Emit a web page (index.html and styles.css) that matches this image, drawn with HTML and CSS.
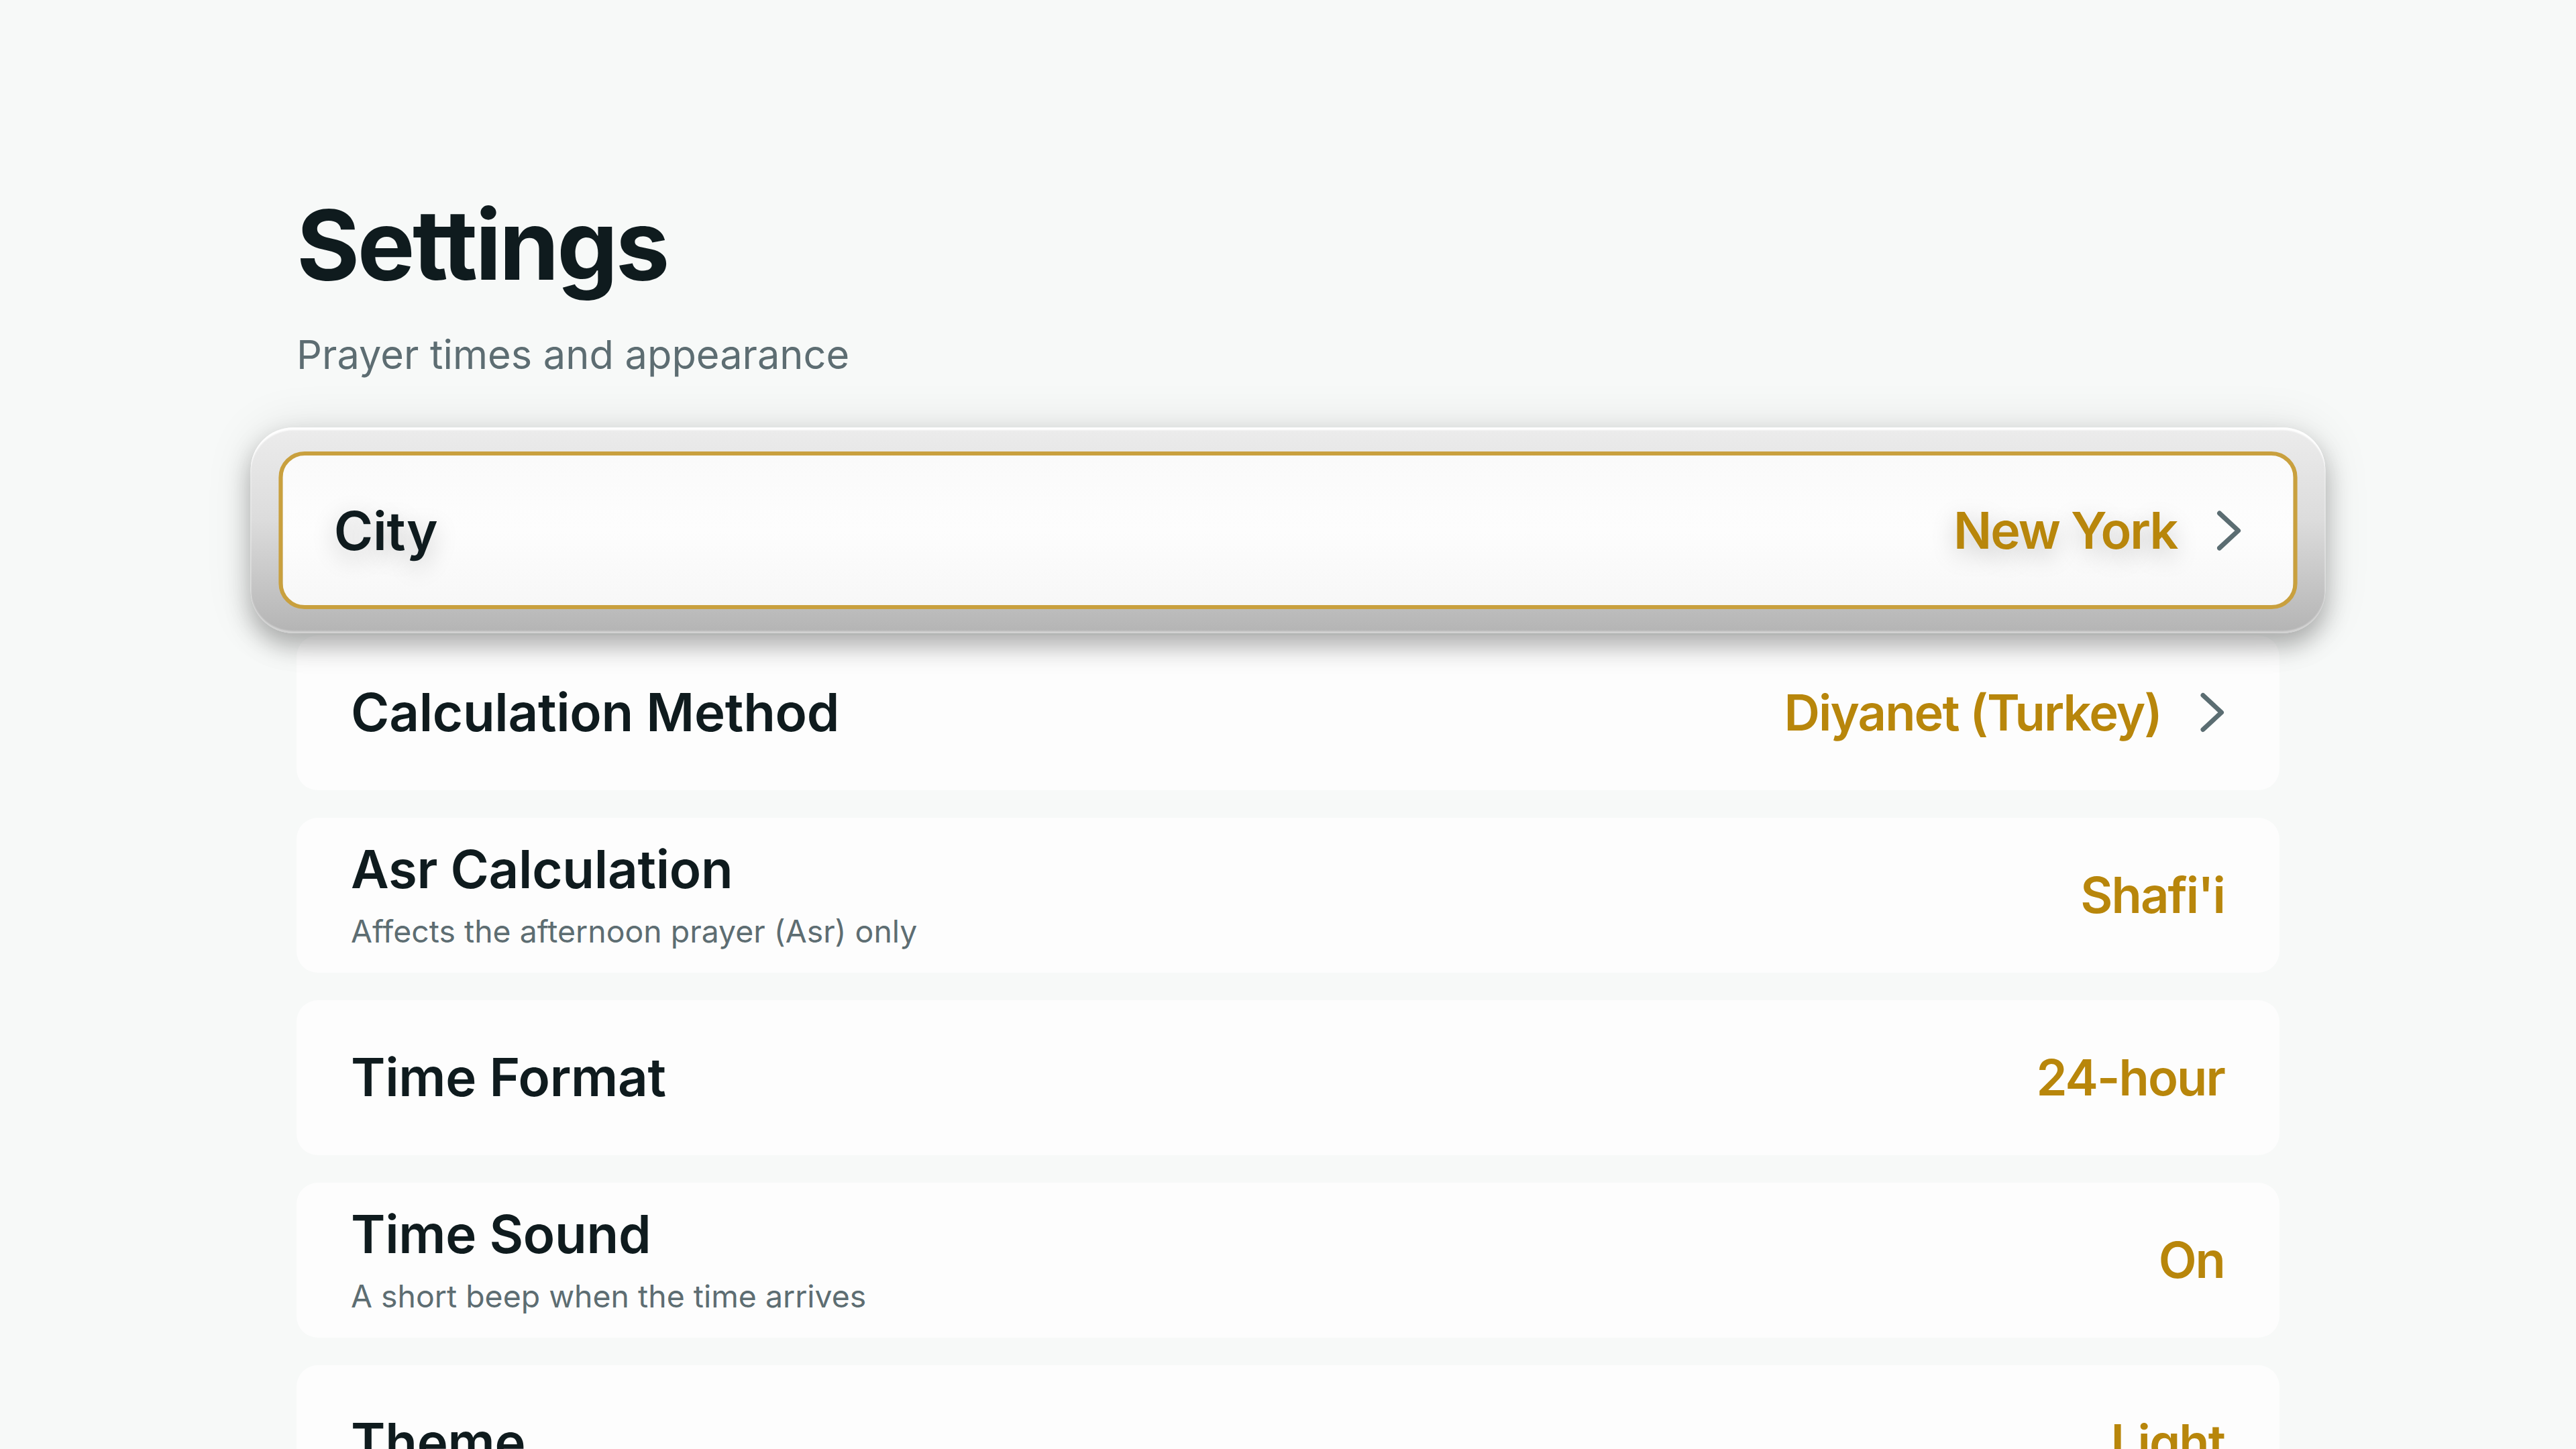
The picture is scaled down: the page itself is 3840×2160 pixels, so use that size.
FILE: index.html
```html
<!DOCTYPE html>
<html lang="en">

<head>
    <meta charset="UTF-8">
    <title>Settings</title>
    <link rel="stylesheet" href="styles.css">
</head>

<body>
    <!-- settings page -->
    <main class="settings">
        <header class="settings-head">
            <h1>Settings</h1>
            <p class="lead">Prayer times and appearance</p>
        </header>

        <div class="rows">
            <!-- focused row sits in a raised ring -->
            <div class="focus-ring">
                <div class="row row-focused">
                    <div class="row-text">
                        <span class="label">City</span>
                    </div>
                    <div class="row-value">
                        <span class="value">New York</span>
                        <svg class="chevron" viewBox="0 0 36 60"><path d="M4 4.5 L31.5 30 L4 55.5"/></svg>
                    </div>
                </div>
            </div>

            <div class="row">
                <div class="row-text">
                    <span class="label">Calculation Method</span>
                </div>
                <div class="row-value">
                    <span class="value">Diyanet (Turkey)</span>
                    <svg class="chevron" viewBox="0 0 36 60"><path d="M4 4.5 L31.5 30 L4 55.5"/></svg>
                </div>
            </div>

            <div class="row">
                <div class="row-text">
                    <span class="label">Asr Calculation</span>
                    <span class="hint">Affects the afternoon prayer (Asr) only</span>
                </div>
                <div class="row-value">
                    <span class="value">Shafi'i</span>
                </div>
            </div>

            <div class="row">
                <div class="row-text">
                    <span class="label">Time Format</span>
                </div>
                <div class="row-value">
                    <span class="value">24-hour</span>
                </div>
            </div>

            <div class="row">
                <div class="row-text">
                    <span class="label">Time Sound</span>
                    <span class="hint">A short beep when the time arrives</span>
                </div>
                <div class="row-value">
                    <span class="value">On</span>
                </div>
            </div>

            <div class="row">
                <div class="row-text">
                    <span class="label">Theme</span>
                </div>
                <div class="row-value">
                    <span class="value">Light</span>
                </div>
            </div>
        </div>
    </main>
    <!-- /settings page -->
</body>

</html>
```

FILE: styles.css
```css
* {
    margin: 0;
    padding: 0;
    box-sizing: border-box;
}

html,
body {
    height: 100%;
    overflow: hidden;
}

body {
    font-family: Inter, 'Noto Sans', 'Liberation Sans', sans-serif;
    background-color: #f7f9f8;
    color: #0f1b1e;
}

/* page */

.settings {
    width: 2956px;
    margin: 0 auto;
    padding-top: 293px;
}

.settings-head h1 {
    font-size: 144px;
    font-weight: 700;
    line-height: 1;
    letter-spacing: -3.5px;
}

.settings-head .lead {
    margin-top: 62px;
    font-size: 59.5px;
    line-height: 1;
    color: #5d6d72;
}

/* rows */

.rows {
    display: flex;
    flex-direction: column;
    gap: 41px;
    margin-top: 116px;
}

.row {
    display: flex;
    align-items: center;
    justify-content: space-between;
    height: 231px;
    padding: 0 82px 0 81px;
    background-color: #fdfdfd;
    border-radius: 32px;
}

.row-text {
    display: flex;
    flex-direction: column;
    gap: 30px;
}

.label {
    font-size: 78px;
    font-weight: 600;
    line-height: 1;
    letter-spacing: -0.3px;
}

.hint {
    font-size: 46.4px;
    line-height: 1;
    color: #5d6d72;
}

.row-value {
    display: flex;
    align-items: center;
    gap: 58px;
}

.value {
    font-size: 74px;
    font-weight: 600;
    line-height: 1;
    letter-spacing: -1.9px;
    color: #b8860b;
}

.chevron {
    width: 36px;
    height: 60px;
    fill: none;
    stroke: #5b6d72;
    stroke-width: 7;
    stroke-linecap: round;
    stroke-linejoin: round;
}

/* focused row */

.focus-ring {
    position: relative;
    z-index: 1;
    margin: -35px -41px;
    padding: 35px 41px;
    border-radius: 62px;
    background: linear-gradient(to bottom, #ececec 0%, #dcdcdc 45%, #b4b4b4 100%);
    box-shadow: inset 0 4px 2px rgba(255, 255, 255, 0.95),
        inset 0 -3px 2px rgba(255, 255, 255, 0.4),
        0 18px 36px rgba(0, 0, 0, 0.28),
        0 0 70px rgba(0, 0, 0, 0.1);
    transform: scale(1.018);
}

.row-focused {
    padding: 0 76px 0 75px;
    border: 6px solid #c9a03e;
    border-radius: 38px;
    background: linear-gradient(to bottom, #fafafa, #fdfdfd 50%, #f7f7f7);
}

.row-focused .label,
.row-focused .value {
    text-shadow: 0 10px 36px rgba(0, 0, 0, 0.22);
}
```
